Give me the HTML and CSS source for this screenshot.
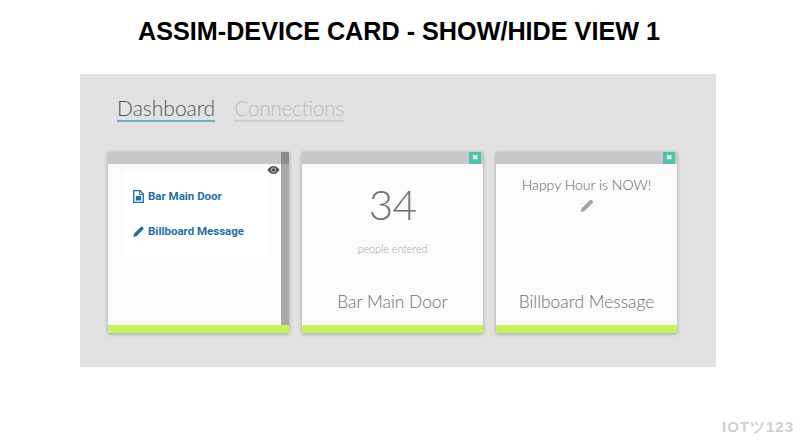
FILE: index.html
```html
<!DOCTYPE html>
<html lang="en">
<head>
    <meta charset="UTF-8">
    <title>Assim-Device Card</title>
    <link rel="stylesheet" href="styles.css">
</head>
<body>
    <h1 class="title">ASSIM-DEVICE CARD - SHOW/HIDE VIEW 1</h1>

    <div class="panel">
        <div class="tabs">
            <span class="tab active">Dashboard</span>
            <span class="tab">Connections</span>
        </div>

        <div class="cards">
            <div class="card menu-card">
                <div class="card-head"><span class="scroll-top"></span></div>
                <div class="card-body">
                    <div class="menu-main">
                        <svg class="eye" viewBox="0 0 14 10"><path d="M0.5 5C2.5 2 4.5 0.8 7 0.8S11.5 2 13.5 5C11.5 8 9.5 9.2 7 9.2S2.500 8 0.5 5Z" fill="#555"/><circle cx="7" cy="5" r="2.600" fill="#ddd"/><circle cx="7" cy="5" r="1.800" fill="#444"/></svg>
                        <div class="menu">
                            <div class="menu-item">
                                <svg class="menu-icon" viewBox="0 0 11 13"><path d="M1 0.700H7L10.300 4V12.300H0.700V0.700Z" fill="none" stroke="#1f6fa5" stroke-width="1.300"/><path d="M6.500 1V4.500H10" fill="none" stroke="#1f6fa5"/><rect x="2.800" y="6" width="5.400" height="4.500" fill="#1f6fa5"/></svg>
                                Bar Main Door
                            </div>
                            <div class="menu-item">
                                <svg class="menu-icon" viewBox="0 0 11 13"><path d="M0.300 12L1 8.800L7.500 2.300C8.300 1.500 9.300 1.500 10 2.200C10.700 2.900 10.700 3.900 9.900 4.700L3.400 11.200Z" fill="#1f6fa5"/></svg>
                                Billboard Message
                            </div>
                        </div>
                    </div>
                    <div class="scrollbar"></div>
                </div>
                <div class="card-foot"></div>
            </div>

            <div class="card">
                <div class="card-head"><span class="close">&#10006;</span></div>
                <div class="card-body counter">
                    <div class="count">34</div>
                    <div class="count-label">people entered</div>
                    <div class="card-name">Bar Main Door</div>
                </div>
                <div class="card-foot"></div>
            </div>

            <div class="card">
                <div class="card-head"><span class="close">&#10006;</span></div>
                <div class="card-body billboard">
                    <div class="message">Happy Hour is NOW!</div>
                    <svg class="edit" viewBox="0 0 14 14"><path d="M0.800 13.200L1.700 9.200L9.500 1.400C10.300 0.600 11.400 0.600 12.300 1.500C13.200 2.400 13.200 3.500 12.400 4.300L4.600 12.100Z" fill="#a3a3a3"/></svg>
                    <div class="card-name">Billboard Message</div>
                </div>
                <div class="card-foot"></div>
            </div>
        </div>
    </div>

    <div class="brand">IOTツ123</div>
</body>
</html>
```

FILE: styles.css
```css
html, body { height: 100%; }
body {
    margin: 0;
    background-color: #fff;
    font-family: "Lato", "Liberation Sans", sans-serif;
    overflow: hidden;
    position: relative;
}
.title {
    margin: 0;
    padding: 16px 2px 0 0;
    height: 58px;
    box-sizing: border-box;
    text-align: center;
    font-family: "Liberation Sans", Arial, sans-serif;
    font-size: 25.2px;
    line-height: 30px;
    font-weight: bold;
    color: #000;
}
.panel {
    margin: 16px 0 0 80px;
    width: 636px;
    height: 293px;
    box-sizing: border-box;
    padding: 21px 0 0 28px;
    background-color: #e2e2e2;
}
.tabs { display: flex; gap: 19px; padding-left: 9px; height: 57px; align-items: flex-start; }
.tab {
    padding-top: 1px;
    font-size: 21px;
    font-weight: 300;
    line-height: 24px;
    color: #bcbcbc;
    border-bottom: 2px solid #cfcfcf;
    letter-spacing: -0.38px;
}
.tab.active { color: #555; border-bottom-color: #6fb0c4; letter-spacing: 0; }

.cards { display: flex; gap: 13px; }
.card {
    width: 181px;
    height: 181px;
    display: flex;
    flex-direction: column;
    background-color: #fbfbfb;
    box-shadow: 0 1px 4px rgba(0, 0, 0, 0.3);
}
.card-head {
    height: 12px;
    flex: none;
    display: flex;
    justify-content: flex-end;
    background-color: #c8c8c8;
}
.card-body { flex: 1; min-height: 0; }
.card-foot { height: 8px; flex: none; background-color: #c5f35f; }

.close {
    width: 12px;
    height: 12px;
    margin-right: 2px;
    background-color: #4fc0ad;
    color: #e8f6f3;
    font-size: 8px;
    line-height: 12px;
    text-align: center;
    font-family: "DejaVu Sans", sans-serif;
}

.menu-card .card-body { display: flex; }
.menu-main { flex: 1; position: relative; padding: 8px 13px 0 15px; }
.scrollbar { width: 8px; background-color: #a9a9a9; }
.scroll-top { width: 8px; background-color: #8e8e8e; }
.eye { position: absolute; top: 1px; right: 1px; width: 13px; height: 10px; }
.menu {
    height: 84px;
    box-sizing: border-box;
    padding: 16px 0 0 10px;
    background-color: #fff;
}
.menu-item {
    display: flex;
    align-items: center;
    gap: 4px;
    height: 16px;
    margin-bottom: 19px;
    font-family: "Roboto", "Liberation Sans", sans-serif;
    font-size: 11.5px;
    font-weight: 700;
    color: #1f6fa5;
}
.menu-icon { width: 11px; height: 13px; }

.counter, .billboard { display: flex; flex-direction: column; align-items: center; }
.count {
    margin-top: 18px;
    font-size: 42px;
    font-weight: 300;
    line-height: 44px;
    letter-spacing: -0.5px;
    color: #707070;
}
.count-label {
    margin-top: 16px;
    font-size: 10.7px;
    font-weight: 300;
    line-height: 14px;
    color: #a6a6a6;
}
.card-name {
    margin-top: auto;
    margin-bottom: 11px;
    font-size: 17.4px;
    font-weight: 300;
    line-height: 24px;
    color: #707070;
}
.message {
    margin-top: 12px;
    font-size: 14px;
    font-weight: 300;
    line-height: 18px;
    color: #606060;
}
.edit { width: 14px; height: 14px; margin-top: 5px; }

.brand {
    position: absolute;
    right: 6px;
    bottom: 5px;
    font-family: "Liberation Sans", sans-serif;
    font-size: 15px;
    font-weight: bold;
    letter-spacing: 1px;
    color: #d0d0d0;
    white-space: nowrap;
}
```
